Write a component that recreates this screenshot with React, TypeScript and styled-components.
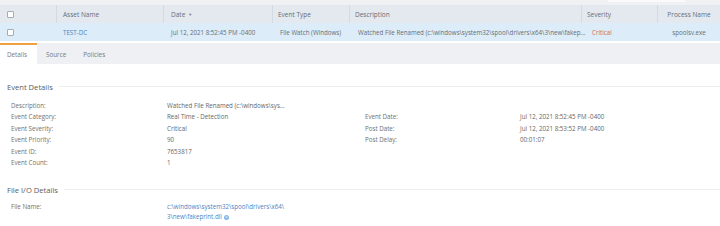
import React from 'react'
import styled, { createGlobalStyle } from 'styled-components'

const GlobalStyle = createGlobalStyle`
  html, body {
    margin: 0;
    padding: 0;
    background: #ffffff;
  }

  body {
    font-family: 'Open Sans', 'Liberation Sans', sans-serif;
    color: #666;
    width: 720px;
    height: 226px;
    overflow: hidden;
  }
`

const TopStrip = styled.div`
  height: 5px;
  background: #f0f1f3;
  position: relative;

  .thumb {
    position: absolute;
    left: 608px;
    top: 0;
    width: 77px;
    height: 2px;
    background: #fafafa;
  }
`

const COLS = '56px 107px 109px 77px 232px 76px 1fr'

const Row = styled.div<{ $head?: boolean }>`
  display: grid;
  grid-template-columns: ${COLS};
  height: 18px;
  align-items: center;
  font-size: ${props => (props.$head ? '6.5px' : '6.2px')};
  background: ${props => (props.$head ? '#e3e9ef' : '#dcecf8')};
  color: #686d74;
`

const Cell = styled.div<{ $pad?: number; $head?: boolean; $center?: boolean; $color?: string }>`
  height: 100%;
  min-width: 0;
  display: flex;
  align-items: center;
  justify-content: ${props => (props.$center ? 'center' : 'flex-start')};
  padding-left: ${props => (props.$center ? 0 : props.$pad ?? 6)}px;
  border-left: 1px solid ${props => (props.$head ? '#d3dae2' : 'transparent')};
  white-space: nowrap;
  color: ${props => props.$color ?? 'inherit'};
  box-sizing: border-box;

  &:first-child {
    border-left: none;
  }
`

const Check = styled.span`
  display: inline-block;
  width: 5px;
  height: 5px;
  border: 1px solid #a3abb4;
  border-radius: 1px;
  background: #fff;
`

const Caret = styled.span`
  font-size: 4px;
  margin-left: 3px;
  color: #777;
`

const Gap = styled.div`
  height: 2px;
  background: #fff;
`

const TabBar = styled.div`
  display: flex;
  height: 21px;
  background: #eef0f3;
  font-size: 6.3px;
  color: #757a80;
`

const Tab = styled.div<{ $active?: boolean }>`
  display: flex;
  align-items: center;
  box-sizing: border-box;
  width: ${props => (props.$active ? '37px' : 'auto')};
  padding: 0 ${props => (props.$active ? '0 0 7px' : '8px 0 9px')};
  background: ${props => (props.$active ? '#ffffff' : 'transparent')};
  border-top: 2px solid ${props => (props.$active ? '#f0a040' : 'transparent')};
`

const Section = styled.section<{ $top: number }>`
  padding: ${props => props.$top}px 0 0 7px;
`

const Heading = styled.div`
  display: flex;
  align-items: center;
  gap: 6px;
  font-size: 7.6px;
  color: #5c5c5c;
  height: 11px;

  &::after {
    content: '';
    flex: 1;
    height: 1px;
    background: #ededed;
  }
`

const DetailGrid = styled.div<{ $top: number }>`
  display: grid;
  grid-template-columns: 156px 198px 155px 1fr;
  padding: ${props => props.$top}px 0 0 4px;
  font-size: 6.2px;
  line-height: 11.4px;
`

const Label = styled.div`
  color: #707070;
`

const Value = styled.div`
  color: #666;
`

const FileValue = styled.div`
  color: #4a84c4;
  line-height: 10.5px;
  padding-top: 0.5px;
`

const InfoDot = () => (
  <svg width="5" height="5" viewBox="0 0 10 10" style={{ verticalAlign: '-0.5px', marginLeft: 2 }}>
    <circle cx="5" cy="5" r="5" fill="#86b5e3" />
    <circle cx="5" cy="4" r="2.4" fill="#bcd8f2" />
  </svg>
)

export default function App() {
  return (
    <>
      <GlobalStyle />
      <TopStrip>
        <div className="thumb" />
      </TopStrip>
      <Row $head>
        <Cell $head $pad={7}><Check /></Cell>
        <Cell $head>Asset Name</Cell>
        <Cell $head $pad={7}>Date<Caret>▼</Caret></Cell>
        <Cell $head $pad={5}>Event Type</Cell>
        <Cell $head $pad={5}>Description</Cell>
        <Cell $head $pad={5}>Severity</Cell>
        <Cell $head $center>Process Name</Cell>
      </Row>
      <Row>
        <Cell $pad={7}><Check /></Cell>
        <Cell $color="#4a84c4">TEST-DC</Cell>
        <Cell $pad={7}>Jul 12, 2021 8:52:45 PM -0400</Cell>
        <Cell $pad={7}>File Watch (Windows)</Cell>
        <Cell $pad={8}>Watched File Renamed (c:\windows\system32\spool\drivers\x64\3\new\fakep...</Cell>
        <Cell $pad={10} $color="#e36363">Critical</Cell>
        <Cell $center>spoolsv.exe</Cell>
      </Row>
      <Gap />
      <TabBar>
        <Tab $active>Details</Tab>
        <Tab>Source</Tab>
        <Tab>Policies</Tab>
      </TabBar>

      <Section $top={17}>
        <Heading>Event Details</Heading>
        <DetailGrid $top={8}>
          <Label>Description:</Label>
          <Value>Watched File Renamed (c:\windows\sys...</Value>
          <div />
          <div />

          <Label>Event Category:</Label>
          <Value>Real Time - Detection</Value>
          <Label>Event Date:</Label>
          <Value>Jul 12, 2021 8:52:45 PM -0400</Value>

          <Label>Event Severity:</Label>
          <Value>Critical</Value>
          <Label>Post Date:</Label>
          <Value>Jul 12, 2021 8:53:52 PM -0400</Value>

          <Label>Event Priority:</Label>
          <Value>90</Value>
          <Label>Post Delay:</Label>
          <Value>00:01:07</Value>

          <Label>Event ID:</Label>
          <Value>7653817</Value>
          <div />
          <div />

          <Label>Event Count:</Label>
          <Value>1</Value>
          <div />
          <div />
        </DetailGrid>
      </Section>

      <Section $top={16}>
        <Heading>File I/O Details</Heading>
        <DetailGrid $top={6}>
          <Label>File Name:</Label>
          <FileValue>
            c:\windows\system32\spool\drivers\x64\
            <br />
            3\new\fakeprint.dll
            <InfoDot />
          </FileValue>
          <div />
          <div />
        </DetailGrid>
      </Section>
    </>
  )
}
